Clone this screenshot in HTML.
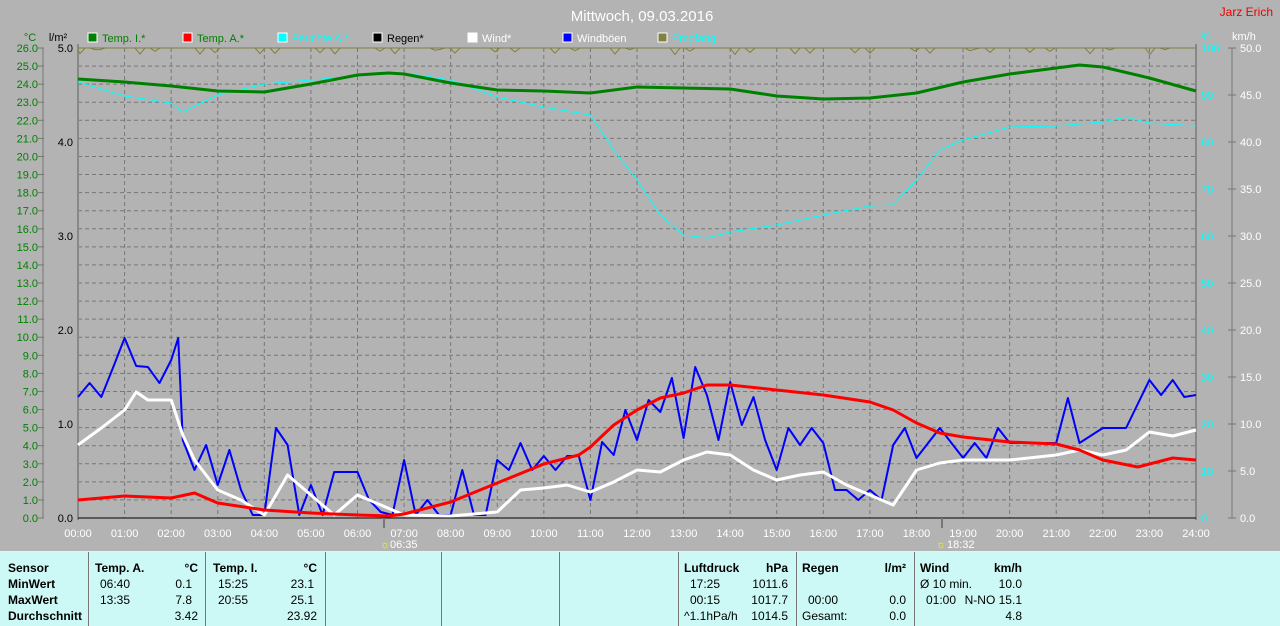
<!DOCTYPE html><html><head><meta charset="utf-8"><style>
body{margin:0;width:1280px;height:625px;background:#b3b3b3;font-family:"Liberation Sans",sans-serif;overflow:hidden;position:relative}
svg{position:absolute;left:0;top:0}
#tb{position:absolute;left:0;top:551px;width:1280px;height:74px;background:#ccf9f6;border-top:1px solid #eee;font-size:12px;color:#000}
.c{position:absolute;top:0;height:74px;border-left:1px solid #777}
.t{position:absolute;white-space:nowrap}
.b{font-weight:bold}
</style></head><body>
<svg width="1280" height="551" id="s" font-family="Liberation Sans, sans-serif"></svg>
<div id="tb"></div>
<script>
const S=document.getElementById('s');let h='';
const X=t=>78+46.583*t;
h+='<text x="642" y="21" fill="#fff" font-size="15" text-anchor="middle">Mittwoch, 09.03.2016</text>';
h+='<text x="1273" y="16" fill="#e00" font-size="12" text-anchor="end">Jarz Erich</text>';
const lg=[["Temp. I.*","#008000","#008000"],["Temp. A.*","#f00","#008000"],["Feuchte A.*","#0ff","#0ff"],["Regen*","#000","#000"],["Wind*","#fff","#fff"],["Windböen","#00f","#fff"],["Empfang","#808040","#0ff"]];
lg.forEach((l,i)=>{let x=88+95*i;h+=`<rect x="${x}" y="33" width="9" height="9" fill="${l[1]}" stroke="#fff"/><text x="${x+14}" y="42" fill="${l[2]}" font-size="11">${l[0]}</text>`});
h+='<text x="30" y="41" fill="#008000" font-size="11" text-anchor="middle">°C</text><text x="58" y="41" fill="#000" font-size="11" text-anchor="middle">l/m²</text>';
h+='<text x="1201" y="40" fill="#0ff" font-size="11">%</text><text x="1232" y="40" fill="#fff" font-size="11">km/h</text>';
for(let v=1;v<26;v++){let y=48+18.077*v;h+=`<line x1="78" x2="1196" y1="${y}" y2="${y}" stroke="#777" stroke-dasharray="4,3"/>`}
for(let t=1;t<24;t++){h+=`<line x1="${X(t)}" x2="${X(t)}" y1="48" y2="518" stroke="#777" stroke-dasharray="4,3"/>`}
for(let v=0;v<=26;v++){let y=48+18.077*(26-v);h+=`<text x="38" y="${y+4}" fill="#008000" font-size="11" text-anchor="end">${v.toFixed(1)}</text><line x1="38" x2="44" y1="${y}" y2="${y}" stroke="#777"/>`}
h+='<line x1="43" x2="43" y1="48" y2="518" stroke="#777"/>';
for(let v=0;v<=5;v++){let y=518-94*v;h+=`<text x="73" y="${y+4}" fill="#000" font-size="11" text-anchor="end">${v.toFixed(1)}</text>`}
for(let v=0;v<=10;v++){let y=518-47*v;h+=`<text x="1201" y="${y+4}" fill="#0ff" font-size="11">${v*10}</text><line x1="1228" x2="1236" y1="${y}" y2="${y}" stroke="#777"/><text x="1240" y="${y+4}" fill="#fff" font-size="11">${(v*5).toFixed(1)}</text>`}
h+='<line x1="1232" x2="1232" y1="48" y2="518" stroke="#777"/>';
for(let t=0;t<=24;t++){h+=`<text x="${X(t)}" y="537" fill="#fff" font-size="11" text-anchor="middle">${String(t).padStart(2,'0')}:00</text>`}
h+='<line x1="78" x2="78" y1="44" y2="520" stroke="#888" stroke-width="2"/><line x1="1196" x2="1196" y1="44" y2="520" stroke="#888" stroke-width="2"/><line x1="78" x2="1196" y1="518" y2="518" stroke="#000"/>';
h+='<line x1="384" x2="384" y1="518" y2="528" stroke="#777" stroke-width="2"/><text x="390" y="548" fill="#fff" font-size="11">06:35</text><text x="380" y="548" fill="#ff0" font-size="11">☼</text>';
h+='<line x1="942" x2="942" y1="518" y2="528" stroke="#777" stroke-width="2"/><text x="947" y="548" fill="#fff" font-size="11">18:32</text><text x="936" y="548" fill="#ff0" font-size="11">☼</text>';
let e='M78 50';for(let x=80;x<1194;x+=5){let d=Math.sin(x*0.37)*Math.sin(x*0.053);let y=d>0.5?48+(d-0.4)*12:48;e+=` L${x} ${y.toFixed(1)}`}
h+=`<path d="${e}" fill="none" stroke="#808040"/><line x1="78" x2="1196" y1="48" y2="48" stroke="#808040"/>`;
function P(a,c,w){let d='';for(let i=0;i<a.length;i+=2)d+=(i?'L':'M')+X(a[i]).toFixed(1)+' '+a[i+1]+' ';h+=`<path d="${d}" fill="none" stroke="${c}" stroke-width="${w}" stroke-linejoin="round"/>`}
P([0,82,1,96,2,103,2.25,112,3,95,4,84,5,80,6,76,7,73,8,80,9,97,10,107,11,115,11.5,150,12,180,12.5,215,13,235,13.5,238,14,232,15,225,16,215,17,206,17.5,205,18,180,18.5,150,19,140,20,127,21,126,22,122,22.5,117,23,123,24,126],'#0ff',1);
P([0,79,1,82,2,86,3,91,4,92,5,84,6,75,6.67,73,7,74,8,83,9,90,10,91,11,93,12,87,13,88,14,89,15,96,16,99,17,98,18,93,19,82,20,74,21,68,21.5,65,22,67,23,78,24,91],'#008000',3);
P([0,397,.25,383,.5,397,.75,368,1,338,1.25,366,1.5,367,1.75,383,2,360,2.15,338,2.25,440,2.5,470,2.75,445,3,485,3.25,450,3.5,490,3.75,515,4,515,4.25,428,4.5,445,4.75,515,5,485,5.25,515,5.5,472,6,472,6.25,500,6.5,512,6.75,515,7,460,7.25,515,7.5,500,7.75,515,8,515,8.25,470,8.5,515,8.75,515,9,460,9.25,470,9.5,443,9.75,470,10,456,10.25,470,10.5,456,10.75,456,11,500,11.25,442,11.5,455,11.75,410,12,440,12.25,400,12.5,412,12.75,378,13,438,13.25,367,13.5,395,13.75,440,14,382,14.25,425,14.5,397,14.75,440,15,470,15.25,428,15.5,445,15.75,428,16,443,16.25,490,16.5,490,16.75,500,17,490,17.25,500,17.5,445,17.75,428,18,458,18.5,428,19,458,19.25,443,19.5,458,19.75,428,20,443,20.5,443,21,443,21.25,398,21.5,443,22,428,22.5,428,23,380,23.25,395,23.5,380,23.75,397,24,395],'#00f',2);
P([0,445,.5,428,1,410,1.25,392,1.5,400,2,400,2.25,435,2.5,460,3,490,3.5,500,4,515,4.25,495,4.5,475,5,495,5.5,515,6,495,6.5,505,7,515,8,516,9,512,9.5,490,10,488,10.5,485,11,492,11.5,482,12,470,12.5,472,13,460,13.5,452,14,455,14.5,470,15,480,15.5,475,16,472,16.5,485,17,495,17.5,505,18,470,18.5,463,19,460,20,460,21,455,21.5,450,22,455,22.5,450,23,432,23.5,436,24,430],'#fff',3);
P([0,500,1,496,2,498,2.5,493,3,503,4,510,5,513,6,515,6.67,516,7,514,8,502,9,483,10,464,10.75,455,11,447,11.5,425,12,410,12.5,398,13,393,13.5,385,14,385,15,390,16,395,17,402,17.5,410,18,423,18.5,433,19,437,20,442,21,444,21.5,450,22,460,22.75,467,23.5,458,24,460],'#f00',3);
S.innerHTML=h;
const tb=document.getElementById('tb');let q='';
[88,205,325,441,559,678,796,914].forEach(x=>q+=`<div class="c" style="left:${x}px"></div>`);
function T(x,y,s,b,r){q+=`<div class="t${b?' b':''}" style="${r?'right:'+(1280-x):'left:'+x}px;top:${y}px">${s}</div>`}
const R=[9,25,41,57];
['Sensor','MinWert','MaxWert','Durchschnitt'].forEach((s,i)=>T(8,R[i],s,1));
T(95,R[0],'Temp. A.',1);T(198,R[0],'°C',1,1);T(100,R[1],'06:40');T(192,R[1],'0.1',0,1);T(100,R[2],'13:35');T(192,R[2],'7.8',0,1);T(198,R[3],'3.42',0,1);
T(213,R[0],'Temp. I.',1);T(317,R[0],'°C',1,1);T(218,R[1],'15:25');T(314,R[1],'23.1',0,1);T(218,R[2],'20:55');T(314,R[2],'25.1',0,1);T(317,R[3],'23.92',0,1);
T(684,R[0],'Luftdruck',1);T(788,R[0],'hPa',1,1);T(690,R[1],'17:25');T(788,R[1],'1011.6',0,1);T(690,R[2],'00:15');T(788,R[2],'1017.7',0,1);T(684,R[3],'^1.1hPa/h');T(788,R[3],'1014.5',0,1);
T(802,R[0],'Regen',1);T(906,R[0],'l/m²',1,1);T(808,R[2],'00:00');T(906,R[2],'0.0',0,1);T(802,R[3],'Gesamt:');T(906,R[3],'0.0',0,1);
T(920,R[0],'Wind',1);T(1022,R[0],'km/h',1,1);T(920,R[1],'Ø 10 min.');T(1022,R[1],'10.0',0,1);T(926,R[2],'01:00');T(1022,R[2],'N-NO 15.1',0,1);T(1022,R[3],'4.8',0,1);
tb.innerHTML=q;
</script></body></html>
